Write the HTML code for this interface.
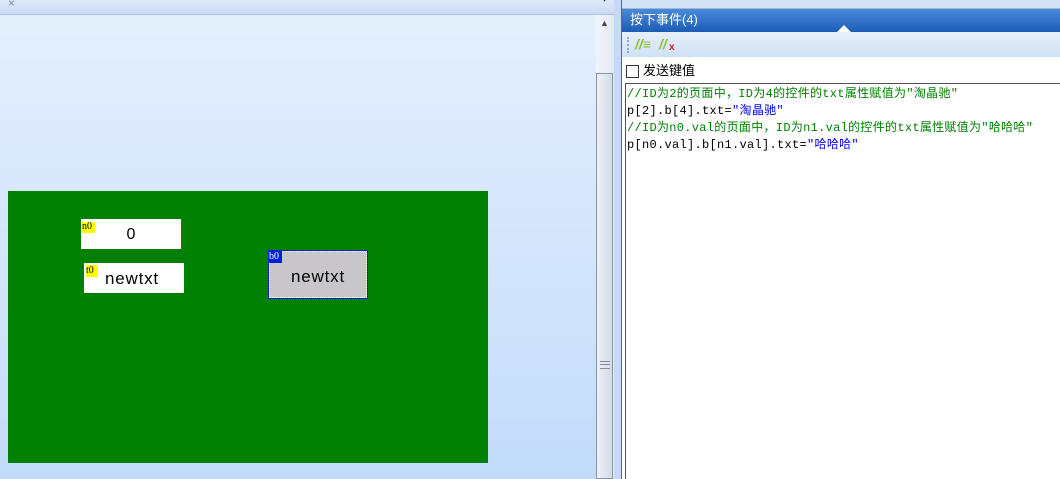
<!DOCTYPE html>
<html><head><meta charset="utf-8"><style>
body{margin:0;width:1060px;height:479px;overflow:hidden;position:relative;font-family:"Liberation Sans","Noto Sans CJK SC",sans-serif;background:#d4e3f7}
div{position:absolute;box-sizing:border-box}
.mono{font-family:"Liberation Mono","Noto Sans CJK SC",monospace;font-size:12px;line-height:17px;white-space:pre;letter-spacing:0.3px}
</style></head><body>
<div style="left:0;top:0;width:596px;height:479px;background:linear-gradient(#e6f0fc,#c3dbfb)"></div>
<div style="left:0;top:0;width:616px;height:15px;background:linear-gradient(#dde9f8,#c9dbf3);border-bottom:1px solid #a9c3e6"></div>
<div style="left:8px;top:-4px;font-size:12px;color:#7890b0">×</div>
<div style="left:602px;top:-6px;font-size:10px;color:#222">▾</div>
<div style="left:8px;top:191px;width:480px;height:272px;background:#008000"></div>
<div style="left:81px;top:219px;width:100px;height:30px;background:#fff;font-size:16px;text-align:center;line-height:32px">0</div>
<div style="left:82px;top:222px;width:13px;height:11px;background:#ff0;font-size:10px;line-height:10px;font-family:'Liberation Serif'">n0</div>
<div style="left:84px;top:263px;width:100px;height:30px;background:#fff;font-size:17px;line-height:32px;padding-left:21px;letter-spacing:0.8px">newtxt</div>
<div style="left:86px;top:265px;width:12px;height:12px;background:#ff0;font-size:10px;line-height:11px;font-family:'Liberation Serif'">t0</div>
<div style="left:268px;top:250px;width:100px;height:49px;background:#c8c6c8;border:1px solid #1020e0;outline:1px dotted #fff;outline-offset:-2px;font-size:17px;text-align:center;line-height:52px;letter-spacing:0.8px">newtxt</div>
<div style="left:269px;top:251px;width:13px;height:12px;background:#0020e0;color:#fff;font-size:10px;line-height:11px;font-family:'Liberation Serif'">b0</div>
<div style="left:596px;top:15px;width:18px;height:464px;background:linear-gradient(90deg,#f2f5fa,#e2e9f3)"></div>
<div style="left:600px;top:18px;font-size:9px;color:#445">▲</div>
<div style="left:596px;top:73px;width:17px;height:406px;background:linear-gradient(90deg,#eef1f6,#d2dbe7);border:1px solid #8593ad"></div>
<div style="left:600px;top:361px;width:10px;height:8px;border-top:1px solid #889;border-bottom:1px solid #889"><div style="left:0;top:2px;width:10px;height:2px;border-top:1px solid #889"></div></div>
<div style="left:614px;top:0;width:8px;height:479px;background:#c5daf6;border-right:1px solid #5a6a86"></div>
<div style="left:622px;top:0;width:438px;height:479px;background:#fff"></div>
<div style="left:622px;top:0;width:438px;height:9px;background:#d3e1f4;border-bottom:1px solid #9fb6d8"></div>
<div style="left:622px;top:9px;width:438px;height:23px;background:linear-gradient(#4a8ad8,#1d5cb6);color:#fff;font-size:13px;line-height:21px;padding-left:8px">按下事件(4)</div>
<div style="left:837px;top:25px;width:0;height:0;border-left:7px solid transparent;border-right:7px solid transparent;border-bottom:7px solid #fff"></div>
<div style="left:622px;top:32px;width:438px;height:25px;background:linear-gradient(#e8f0fb,#d0e0f5)"></div>
<div style="left:627px;top:37px;width:2px;height:16px;border-left:2px dotted #8aa8d0"></div>
<div style="left:635px;top:36px;font-size:14px;font-weight:bold;font-style:italic;color:#8cc036">//≡</div>
<div style="left:659px;top:36px;font-size:14px;font-weight:bold;font-style:italic;color:#8cc036">//</div>
<div style="left:669px;top:42px;font-size:10px;font-weight:bold;color:#e02020">x</div>
<div style="left:626px;top:65px;width:13px;height:13px;border:1px solid #333;background:#fff"></div>
<div style="left:643px;top:62px;font-size:13px;line-height:18px;color:#000">发送键值</div>
<div style="left:625px;top:83px;width:435px;height:396px;border-left:1px solid #555;border-top:1px solid #555"></div>
<div class="mono" style="left:627px;top:86px;color:#000"><span style="color:#008000">//ID为2的页面中，ID为4的控件的txt属性赋值为"淘晶驰"</span>
p[2].b[4].txt=<span style="color:#0000ff">"淘晶驰"</span>
<span style="color:#008000">//ID为n0.val的页面中，ID为n1.val的控件的txt属性赋值为"哈哈哈"</span>
p[n0.val].b[n1.val].txt=<span style="color:#0000ff">"哈哈哈"</span></div>
</body></html>
